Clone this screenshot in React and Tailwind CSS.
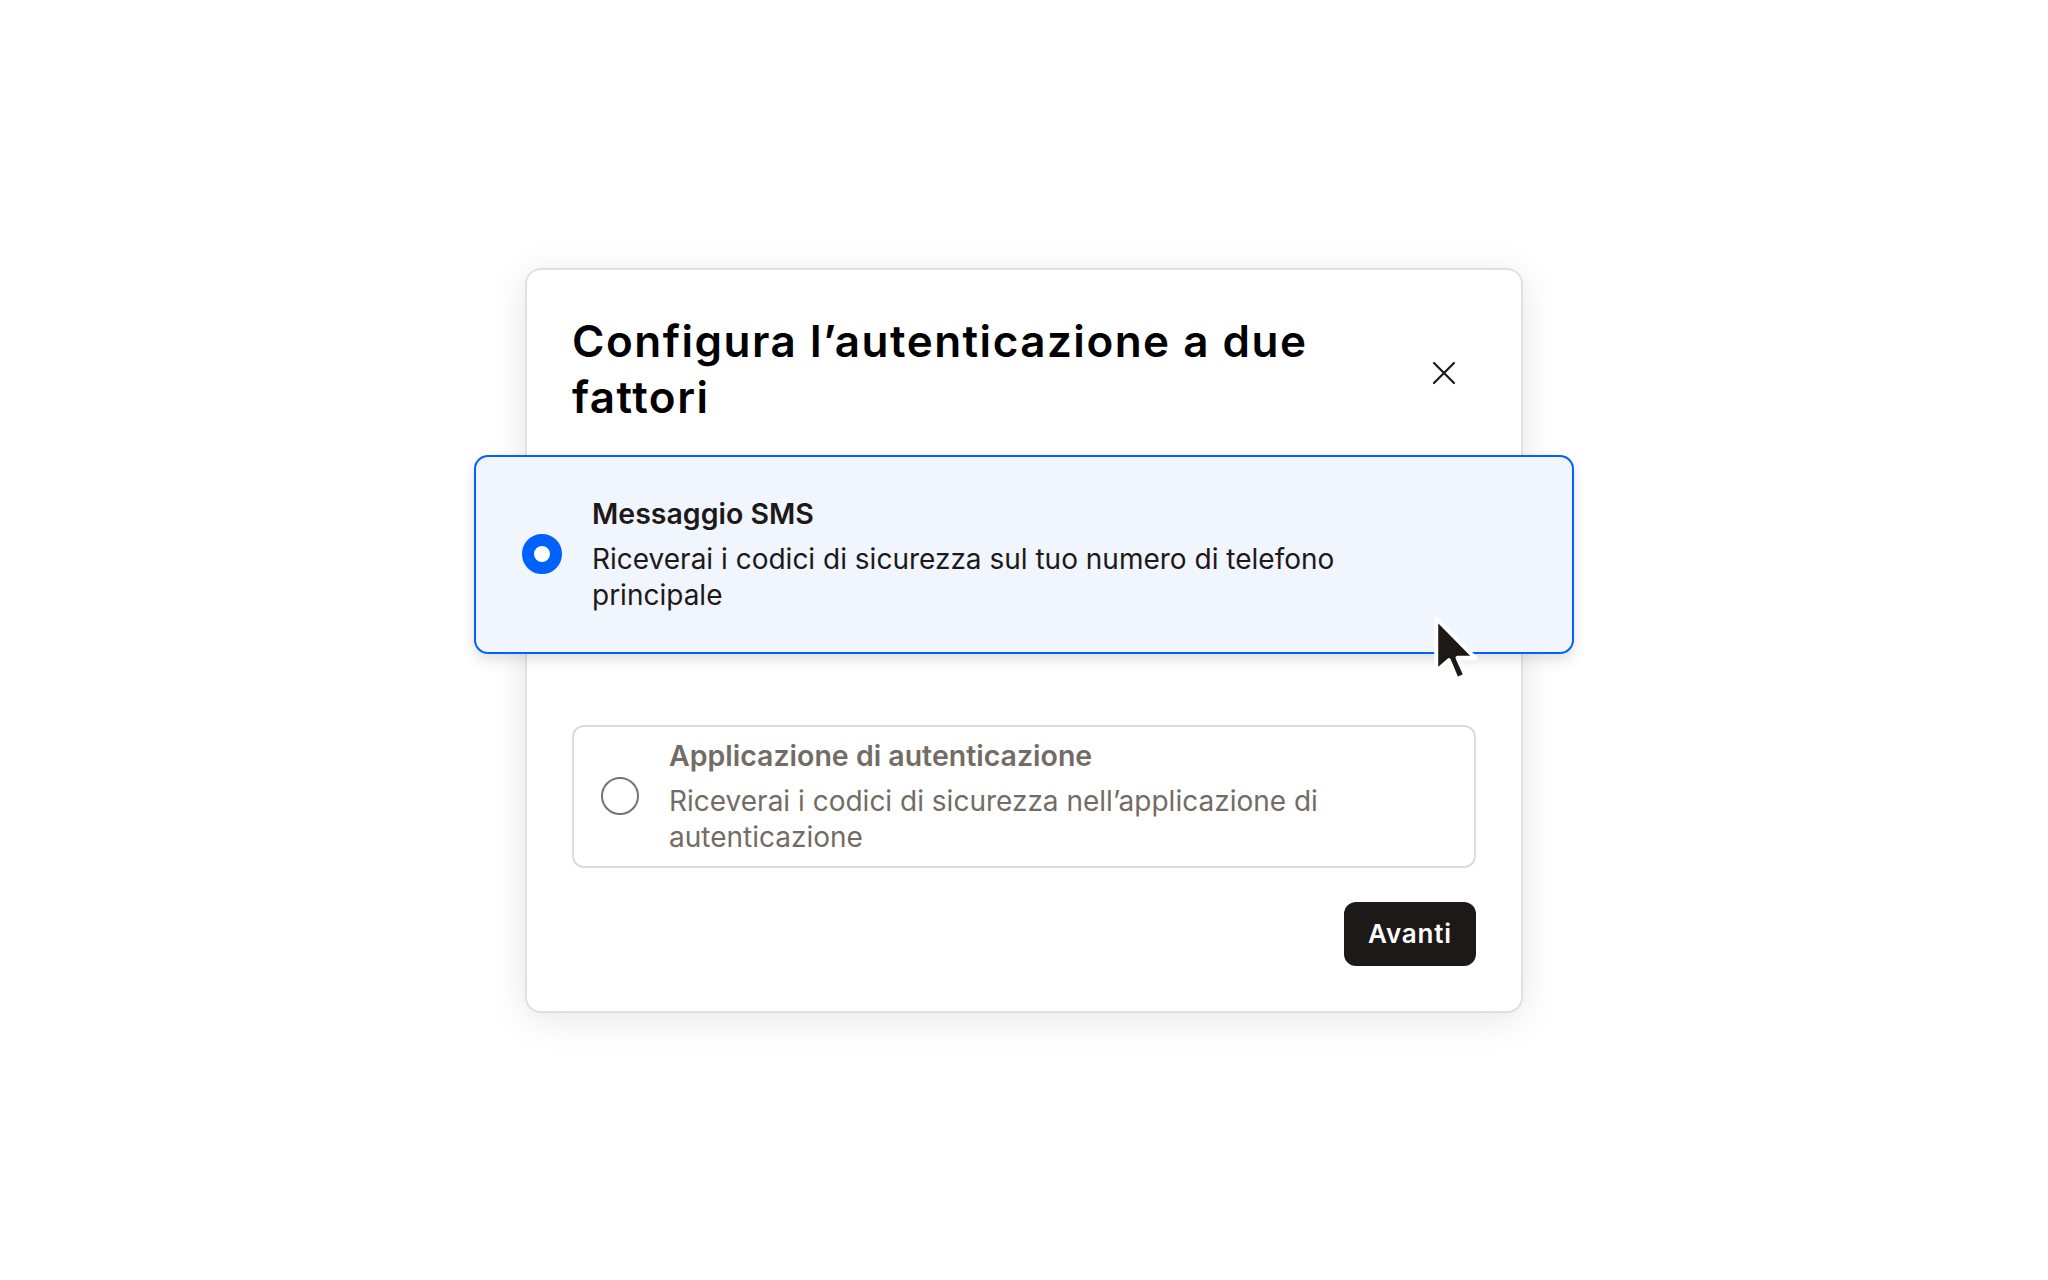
import { useState } from "react";

const CloseIcon = () => (
    <svg width="24" height="24" viewBox="0 0 24 24" fill="none">
        <path
            d="M2 2L22 22M22 2L2 22"
            stroke="#1e1919"
            strokeWidth="2.2"
            strokeLinecap="round"
        />
    </svg>
);

const Pointer = () => (
    <svg width="46" height="70" viewBox="0 0 29 44" fill="none">
        <path
            d="M2 2V35.5L10 28.5L15 40.5L20.5 38L15.5 27H26.5Z"
            fill="#1e1919"
            stroke="#ffffff"
            strokeWidth="2.6"
            strokeLinejoin="round"
        />
    </svg>
);

const Option = ({ selected, title, lines, onSelect, children }) => {
    if (selected) {
        return (
            <button
                type="button"
                onClick={onSelect}
                className="relative -mx-[98px] flex items-center gap-[30px] rounded-[14px] border-2 border-[#0061fe] bg-[#f0f5fe] py-[39px] pl-[46px] pr-10 text-left shadow-[0_6px_14px_rgba(0,0,0,0.12)]"
            >
                <span className="h-10 w-10 shrink-0 rounded-full border-[12px] border-[#0061fe] bg-white" />
                <span className="flex flex-col">
                    <span className="text-[28.5px] font-semibold leading-[36px] text-[#1e1919]">
                        {title}
                    </span>
                    <span className="mt-[9px] text-[28px] leading-[36px] text-[#1e1919]">
                        {lines[0]}
                        <br />
                        {lines[1]}
                    </span>
                </span>
                {children}
            </button>
        );
    }

    return (
        <button
            type="button"
            onClick={onSelect}
            className="flex items-center gap-[30px] rounded-[12px] border-2 border-[#dedcda] bg-white py-[11px] pl-[27px] pr-6 text-left"
        >
            <span className="h-[38px] w-[38px] shrink-0 rounded-full border-2 border-[#7a716a]" />
            <span className="flex flex-col">
                <span className="text-[28.5px] font-semibold leading-[36px] text-[#736c64]">
                    {title}
                </span>
                <span className="mt-[9px] text-[28px] leading-[36px] text-[#736c64]">
                    {lines[0]}
                    <br />
                    {lines[1]}
                </span>
            </span>
        </button>
    );
};

const TwoFactorSetup = () => {
    const [method, setMethod] = useState("sms");

    return (
        <div
            className="flex min-h-screen items-center justify-center bg-white"
            style={{ fontFamily: "Inter, 'Liberation Sans', sans-serif" }}
        >
            <div className="flex w-[998px] flex-col rounded-[16px] border-2 border-[#e0e0e0] bg-white px-[45px] pb-[45px] pt-[43px] shadow-[0_6px_36px_rgba(0,0,0,0.10)]">
                {/* Header */}
                <div className="flex items-center justify-between">
                    <h1 className="text-[44px] font-semibold leading-[56px] tracking-[1.5px] text-[#000000]">
                        Configura l’autenticazione a due
                        <br />
                        fattori
                    </h1>
                    <button
                        type="button"
                        className="mr-[20px] mt-2 flex items-center justify-center"
                    >
                        <CloseIcon />
                    </button>
                </div>

                {/* Methods */}
                <div className="mt-[30px] flex flex-col">
                    <Option
                        selected={method === "sms"}
                        onSelect={() => setMethod("sms")}
                        title="Messaggio SMS"
                        lines={[
                            "Riceverai i codici di sicurezza sul tuo numero di telefono",
                            "principale",
                        ]}
                    >
                        <span className="pointer-events-none absolute left-[957px] top-[158px]">
                            <Pointer />
                        </span>
                    </Option>
                    <div className="h-[71px]" />
                    <Option
                        selected={method === "app"}
                        onSelect={() => setMethod("app")}
                        title="Applicazione di autenticazione"
                        lines={[
                            "Riceverai i codici di sicurezza nell’applicazione di",
                            "autenticazione",
                        ]}
                    />
                </div>

                {/* Footer */}
                <div className="mt-[34px] flex justify-end">
                    <button
                        type="button"
                        className="flex h-16 w-[132px] items-center justify-center rounded-[12px] bg-[#1e1919] text-[26px] font-semibold tracking-[0.8px] text-white"
                    >
                        Avanti
                    </button>
                </div>
            </div>
        </div>
    );
};

export default TwoFactorSetup;
